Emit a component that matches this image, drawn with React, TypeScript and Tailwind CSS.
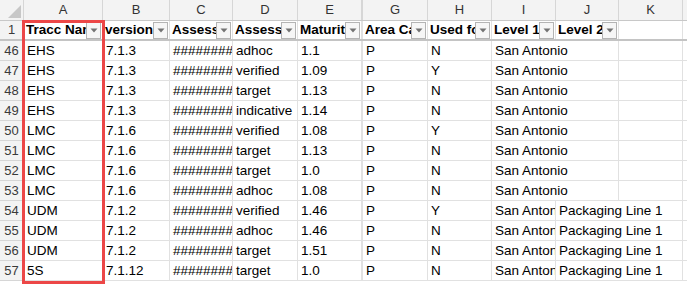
import React from "react";

type Col = { key: string; width: number; extraLeft?: boolean };

const cols: Col[] = [
    { key: "A", width: 79 },
    { key: "B", width: 67 },
    { key: "C", width: 63 },
    { key: "D", width: 65 },
    { key: "E", width: 64 },
    { key: "G", width: 66, extraLeft: true },
    { key: "H", width: 64 },
    { key: "I", width: 64 },
    { key: "J", width: 63 },
    { key: "K", width: 64 },
];

const headers = [
    "Tracc Name",
    "version",
    "Assessment Date",
    "Assessment Type",
    "Maturity",
    "Area Category",
    "Used for",
    "Level 1",
    "Level 2",
];

const rows: { n: number; cells: string[] }[] = [
    { n: 46, cells: ["EHS", "7.1.3", "########", "adhoc", "1.1", "P", "N", "San Antonio", ""] },
    { n: 47, cells: ["EHS", "7.1.3", "########", "verified", "1.09", "P", "Y", "San Antonio", ""] },
    { n: 48, cells: ["EHS", "7.1.3", "########", "target", "1.13", "P", "N", "San Antonio", ""] },
    { n: 49, cells: ["EHS", "7.1.3", "########", "indicative", "1.14", "P", "N", "San Antonio", ""] },
    { n: 50, cells: ["LMC", "7.1.6", "########", "verified", "1.08", "P", "Y", "San Antonio", ""] },
    { n: 51, cells: ["LMC", "7.1.6", "########", "target", "1.13", "P", "N", "San Antonio", ""] },
    { n: 52, cells: ["LMC", "7.1.6", "########", "target", "1.0", "P", "N", "San Antonio", ""] },
    { n: 53, cells: ["LMC", "7.1.6", "########", "adhoc", "1.08", "P", "N", "San Antonio", ""] },
    { n: 54, cells: ["UDM", "7.1.2", "########", "verified", "1.46", "P", "Y", "San Antonio", "Packaging Line 1"] },
    { n: 55, cells: ["UDM", "7.1.2", "########", "adhoc", "1.46", "P", "N", "San Antonio", "Packaging Line 1"] },
    { n: 56, cells: ["UDM", "7.1.2", "########", "target", "1.51", "P", "N", "San Antonio", "Packaging Line 1"] },
    { n: 57, cells: ["5S", "7.1.12", "########", "target", "1.0", "P", "N", "San Antonio", "Packaging Line 1"] },
];

const FilterButton = () => (
    <div className="mr-[1px] flex h-[17px] w-[15px] shrink-0 items-center justify-center border border-[#b4b4b4] bg-[#f6f6f6]">
        <svg width="8" height="5" viewBox="0 0 8 5">
            <path d="M0.5 0.5 L7.5 0.5 L4 4.5 Z" fill="#737373" />
        </svg>
    </div>
);

const RowHead = ({ n }: { n: number }) => (
    <div className="flex h-[20px] w-[24px] shrink-0 items-center justify-center border-r border-b border-[#d6d6d6] bg-[#f3f3f3] text-[13px] text-[#3a3a3a]">
        {n}
    </div>
);

// merge a text cell with its empty right neighbour, like Excel text overflow
function layoutRow(values: string[]) {
    const out: { text: string; width: number; extraLeft?: boolean }[] = [];
    let i = 0;
    while (i < cols.length) {
        const text = values[i] ?? "";
        let width = cols[i].width;
        const extraLeft = cols[i].extraLeft;
        let j = i + 1;
        const isText = text !== "" && !/^[\d.]+$/.test(text) && text !== "########";
        while (isText && j < cols.length && (values[j] ?? "") === "" && j >= 7) {
            width += cols[j].width;
            j++;
            if (text.length < 12) break;
        }
        out.push({ text, width, extraLeft });
        i = j;
    }
    return out;
}

export default function App() {
    return (
        <div
            className="relative h-[286px] w-[687px] overflow-hidden bg-white text-black"
            style={{ fontFamily: '"Liberation Sans", Arial, sans-serif' }}
        >
            {/* column letters */}
            <div className="flex h-[21px] border-b border-[#c8c8c8] bg-[#f3f3f3]">
                <div className="flex w-[24px] shrink-0 items-end justify-end border-r border-[#d6d6d6] p-[2px]">
                    <svg width="13" height="13" viewBox="0 0 13 13">
                        <path d="M13 0 L13 13 L0 13 Z" fill="#c7c7c7" />
                    </svg>
                </div>
                {cols.map((c) => (
                    <div
                        key={c.key}
                        style={{ width: c.width }}
                        className={`flex shrink-0 items-center justify-center border-r border-[#d6d6d6] text-[13px] text-[#333] ${
                            c.extraLeft ? "border-l" : ""
                        }`}
                    >
                        {c.key}
                    </div>
                ))}
                <div className="flex-1" />
            </div>

            {/* header row */}
            <div className="flex h-[20px] border-b-2 border-[#c4c4c4]">
                <div className="flex w-[24px] shrink-0 items-center justify-center border-r border-[#d6d6d6] bg-[#f3f3f3] text-[13px] text-[#3a3a3a]">
                    1
                </div>
                {cols.map((c, i) => (
                    <div
                        key={c.key}
                        style={{ width: c.width }}
                        className={`flex shrink-0 items-center border-r border-[#e1e1e1] ${
                            c.extraLeft ? "border-l" : ""
                        }`}
                    >
                        {headers[i] && (
                            <>
                                <div className="min-w-0 flex-1 overflow-hidden whitespace-nowrap pl-[2px] text-[13.5px] font-bold leading-[18px]">
                                    {headers[i]}
                                </div>
                                <FilterButton />
                            </>
                        )}
                    </div>
                ))}
                <div className="flex-1" />
            </div>

            {/* data rows */}
            {rows.map((r) => (
                <div key={r.n} className="flex h-[20px]">
                    <RowHead n={r.n} />
                    {layoutRow(r.cells).map((c, i) => (
                        <div
                            key={i}
                            style={{ width: c.width }}
                            className={`shrink-0 overflow-hidden whitespace-nowrap border-r border-b border-[#e1e1e1] pl-[3px] text-[13.5px] leading-[19px] ${
                                c.extraLeft ? "border-l" : ""
                            }`}
                        >
                            {c.text}
                        </div>
                    ))}
                    <div className="flex-1 border-b border-[#e1e1e1]" />
                </div>
            ))}

            {/* selection highlight around column A */}
            <div className="pointer-events-none absolute left-[22px] top-[20px] h-[264px] w-[83px] border-[3px] border-[#ec4747]" />
        </div>
    );
}
